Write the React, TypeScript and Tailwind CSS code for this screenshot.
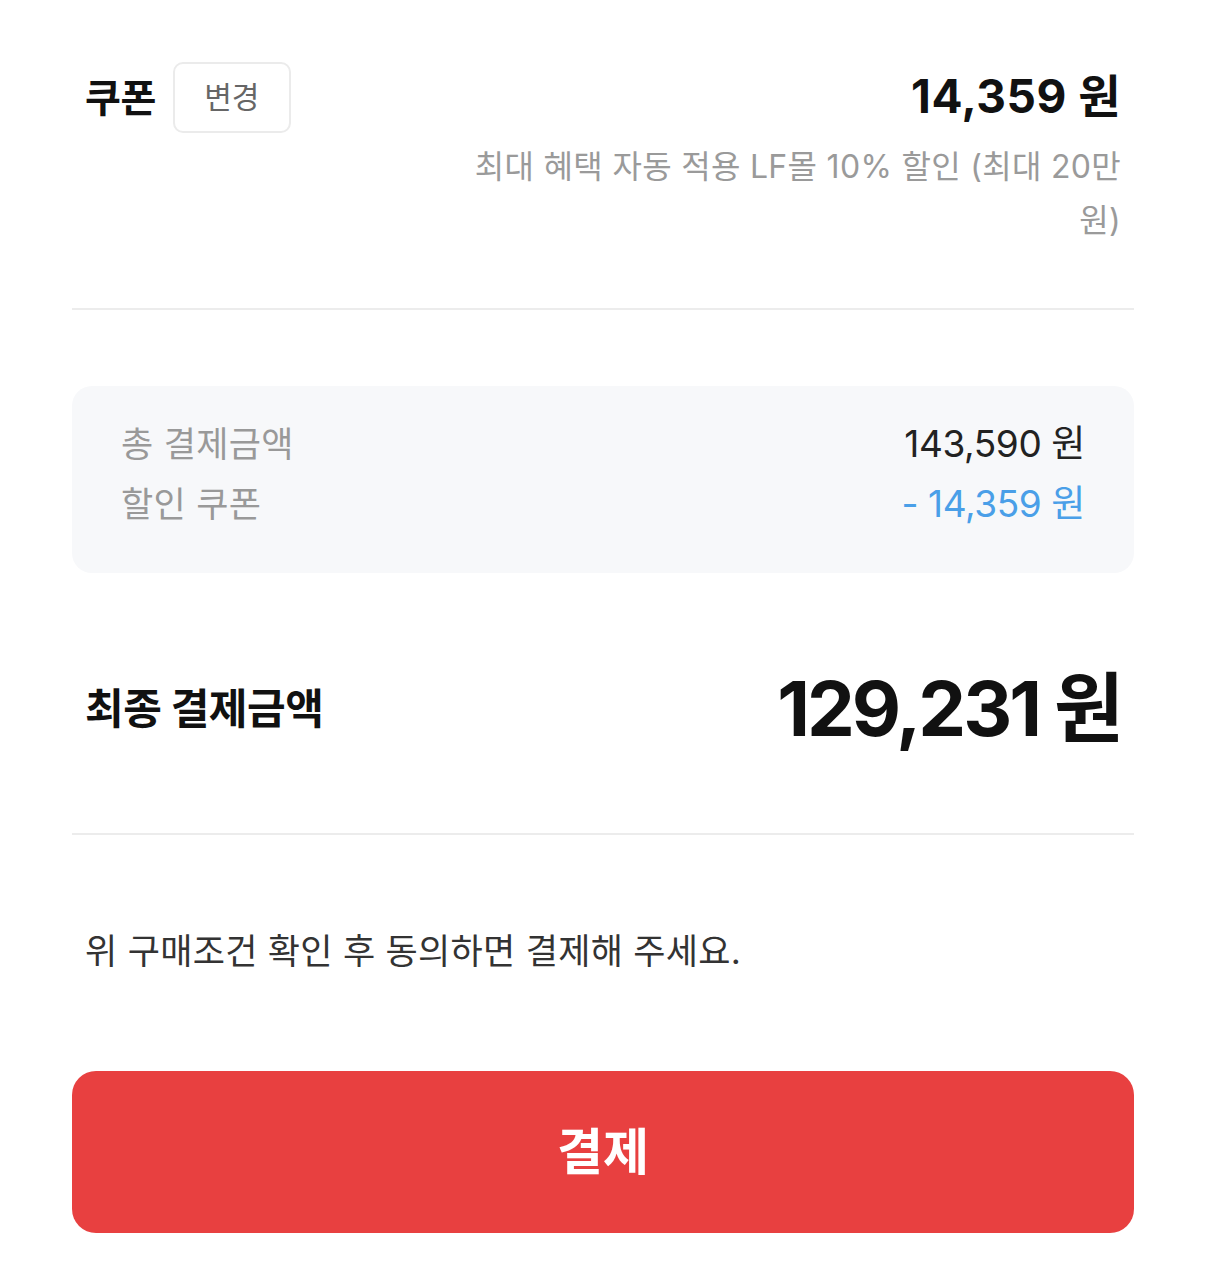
const font = { fontFamily: 'Inter, "Noto Sans CJK KR", sans-serif' };

const App = () => {
  const summary = [
    { label: '총 결제금액', value: '143,590', color: 'text-[#222222]' },
    { label: '할인 쿠폰', value: '- 14,359', color: 'text-[#4a9fe8]' },
  ];

  return (
    <div className="min-h-[1278px] bg-white px-[72px] pt-[62px]" style={font}>
      {/* coupon */}
      <div className="flex items-start justify-between px-[13px] pb-[60px]">
        <div className="flex items-center gap-[17px]">
          <span className="text-[39px] font-bold leading-[71px] tracking-[-0.5px] text-[#111111]">쿠폰</span>
          <button className="flex h-[71px] w-[118px] items-center justify-center rounded-[10px] border-2 border-[#ebebeb] text-[30px] text-[#666666]">
            변경
          </button>
        </div>
        <div className="flex w-[670px] flex-col items-end">
          <div className="mt-[7px] text-[46px] font-bold leading-[54px] tracking-[0.5px] text-[#111111]">
            14,359 원
          </div>
          <p className="mt-[17px] text-right text-[32px] leading-[54px] tracking-[0.3px] text-[#9a9a9a]">
            최대 혜택 자동 적용 LF몰 10% 할인 (최대 20만 원)
          </p>
        </div>
      </div>

      <div className="h-[2px] bg-[#ececec]" />

      {/* summary */}
      <div className="mt-[76px] rounded-[20px] bg-[#f7f8fa] px-[49px] pb-[39px] pt-[28px]">
        {summary.map((row) => (
          <div key={row.label} className="flex items-center justify-between leading-[60px]">
            <span className="text-[35px] tracking-[0.3px] text-[#999999]">{row.label}</span>
            <span className={`text-[37px] tracking-[-0.4px] ${row.color}`}>{row.value} 원</span>
          </div>
        ))}
      </div>

      {/* final amount */}
      <div className="mt-[92px] flex items-center justify-between px-[13px]">
        <span className="text-[42px] font-bold tracking-[-0.5px] text-[#111111]">최종 결제금액</span>
        <span className="text-[76px] font-bold leading-[86px] tracking-[-3px] text-[#111111]">129,231 원</span>
      </div>

      <div className="mt-[82px] h-[2px] bg-[#ececec]" />

      <p className="mt-[92px] px-[13px] text-[35px] leading-[48px] tracking-[0.3px] text-[#333333]">
        위 구매조건 확인 후 동의하면 결제해 주세요.
      </p>

      <button className="mt-[96px] flex h-[162px] w-full items-center justify-center rounded-[24px] bg-[#e84040] text-[50px] font-bold text-white">
        결제
      </button>
    </div>
  );
};

export default App;
